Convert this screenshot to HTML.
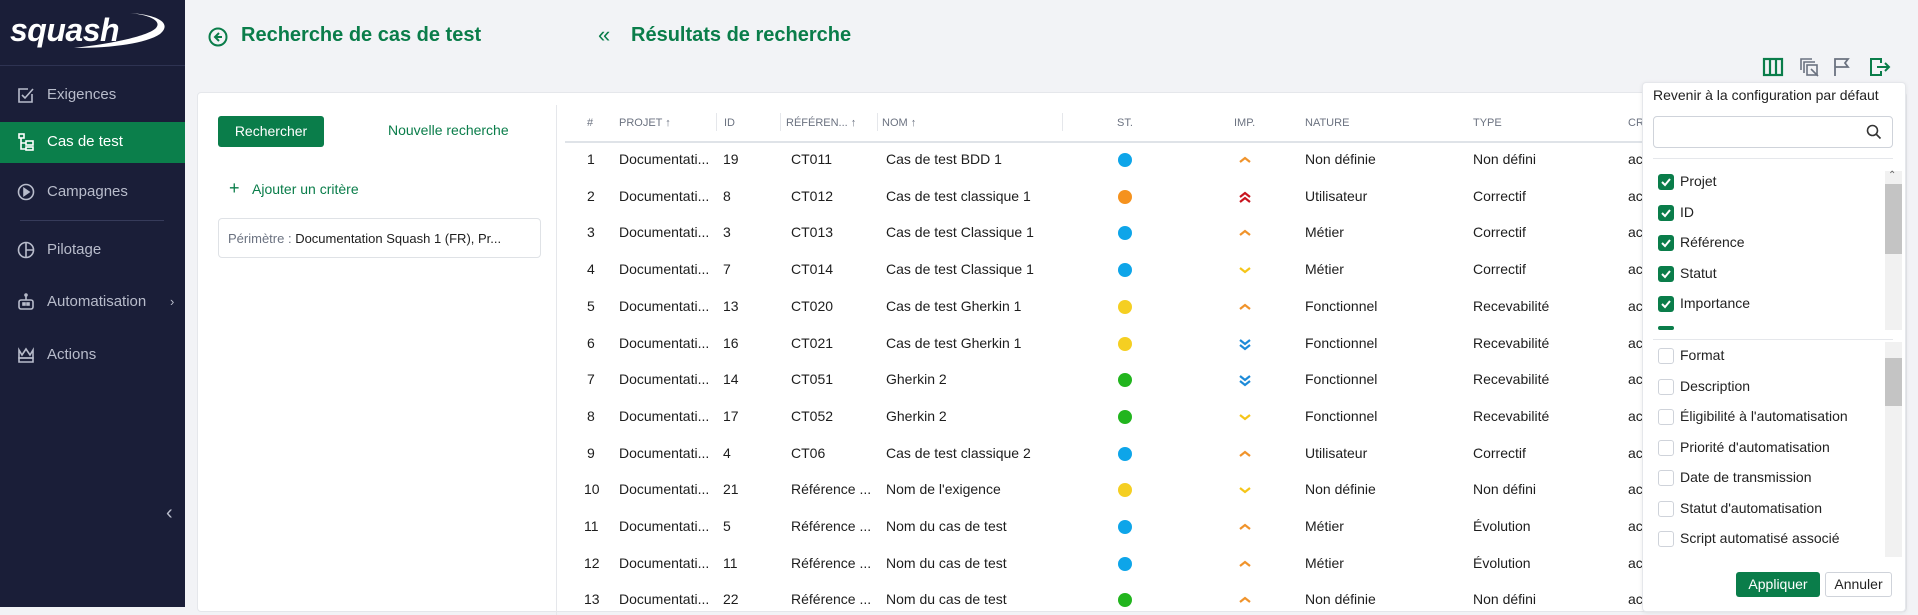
<!DOCTYPE html>
<html><head><meta charset="utf-8"><style>
*{margin:0;padding:0;box-sizing:border-box}
body{width:1918px;height:607px;overflow:hidden;background:#f2f3f6;font-family:"Liberation Sans",sans-serif;position:relative;color:#1d1d1d}
.a{position:absolute;white-space:nowrap}
#side{position:absolute;left:0;top:0;width:185px;height:607px;background:#1a1e38}
.nav{position:absolute;left:0;width:185px;height:40px;color:#b8bccb;font-size:15px;line-height:40px;padding-left:47px}
.nav svg{position:absolute;left:17px;top:11px}
.hd{font-size:11px;color:#6b7280;top:117px}
.c{font-size:14px}
.dot{position:absolute;width:14px;height:14px;border-radius:7px}
.cb{position:absolute;left:1658px;width:16px;height:16px;border-radius:3px}
.on{background:#0a7d4a}
.off{border:1px solid #cfd3da;background:#fff}
.lb{position:absolute;left:1680px;font-size:14px;color:#222}
</style></head><body>
<div id="side">
 <svg class="a" style="left:60px;top:12px" width="110" height="38"><path d="M70 1 C100 3 112 12 100 22 C85 32 50 36 14 36 C55 31 88 24 96 16 C102 9 90 3 70 1Z" fill="#fff"/></svg>
 <div class="a" style="left:10px;top:12px;color:#fff;font:italic bold 32px 'Liberation Sans',sans-serif;letter-spacing:-0.5px">squash</div>
 <div class="a" style="left:0;top:65px;width:185px;height:1px;background:#2e3352"></div>
 <div class="nav" style="top:75px"><svg width="18" height="18" fill="none" stroke="#b8bccb" stroke-width="1.6"><path d="M15 8v8H2V3h9"/><path d="M5 9l3 3 8-9"/></svg>Exigences</div>
 <div class="nav" style="top:122px;height:41px;background:#0b7f4b;color:#fff"><svg width="18" height="18" fill="none" stroke="#fff" stroke-width="1.6"><rect x="2" y="1" width="5" height="4"/><rect x="9" y="8" width="7" height="4"/><rect x="9" y="14" width="7" height="3"/><path d="M4 5v11h5M4 10h5"/></svg>Cas de test</div>
 <div class="nav" style="top:172px"><svg width="18" height="18" fill="none" stroke="#b8bccb" stroke-width="1.6"><circle cx="9" cy="9" r="7.5"/><path d="M7 5.5l5 3.5-5 3.5z" fill="#b8bccb"/></svg>Campagnes</div>
 <div class="a" style="left:20px;top:220px;width:144px;height:1px;background:#363b5a"></div>
 <div class="nav" style="top:230px"><svg width="18" height="18" fill="none" stroke="#b8bccb" stroke-width="1.6"><circle cx="9" cy="9" r="7.5"/><path d="M9 1.5v15M9 9h7.5"/></svg>Pilotage</div>
 <div class="nav" style="top:282px"><svg width="18" height="18" fill="none" stroke="#b8bccb" stroke-width="1.6"><rect x="2" y="7" width="14" height="9" rx="2"/><path d="M9 2v5"/><circle cx="9" cy="2" r="1"/><rect x="6" y="10" width="2" height="2" fill="#b8bccb"/><rect x="10" y="10" width="2" height="2" fill="#b8bccb"/></svg>Automatisation<span style="position:absolute;left:170px;font-size:13px">›</span></div>
 <div class="nav" style="top:335px"><svg width="18" height="18" fill="none" stroke="#b8bccb" stroke-width="1.6"><path d="M2 4l3 5 4-6 4 6 3-5v8H2z"/><path d="M2 12h14v4H2z"/></svg>Actions</div>
 <div class="a" style="left:166px;top:502px;color:#b8bccb;font-size:20px">‹</div>
</div>
<svg class="a" style="left:208px;top:27px" width="20" height="20" fill="none" stroke="#0a7d4a" stroke-width="2"><circle cx="10" cy="10" r="8.5"/><path d="M11 6l-4 4 4 4M7 10h7"/></svg>
<div class="a" style="left:241px;top:24px;font-size:20px;font-weight:bold;color:#0a7d4a">Recherche de cas de test</div>
<div class="a" style="left:598px;top:22px;font-size:22px;color:#0a7d4a">«</div>
<div class="a" style="left:631px;top:24px;font-size:20px;font-weight:bold;color:#0a7d4a">Résultats de recherche</div>
<svg class="a" style="left:1762px;top:57px" width="22" height="20" fill="none" stroke="#0a7d4a" stroke-width="2.2"><rect x="2" y="2" width="18" height="16"/><path d="M8 2v16M14 2v16"/></svg>
<svg class="a" style="left:1799px;top:57px" width="22" height="22" fill="none" stroke="#6b7280" stroke-width="1.6"><path d="M2 13V2h11M5 16V5h11"/><rect x="8" y="8" width="10" height="10"/><path d="M12 12l7 7"/></svg>
<svg class="a" style="left:1832px;top:57px" width="20" height="20" fill="none" stroke="#6b7280" stroke-width="1.8"><path d="M3 19V2h13l-3 4 3 4H3"/></svg>
<svg class="a" style="left:1869px;top:57px" width="22" height="20" fill="none" stroke="#0a7d4a" stroke-width="2"><path d="M12 6V2H2v16h10v-4"/><path d="M8 10h12M16 6l4 4-4 4"/></svg>
<div class="a" style="left:197px;top:92px;width:1710px;height:520px;background:#fff;border:1px solid #e5e7eb;border-radius:4px"></div>
<div class="a" style="left:556px;top:105px;width:1px;height:510px;background:#e5e7eb"></div>
<div class="a" style="left:218px;top:116px;width:106px;height:31px;background:#0a7d4a;border-radius:3px;color:#fff;font-size:14px;line-height:31px;text-align:center">Rechercher</div>
<div class="a" style="left:388px;top:122px;font-size:14px;color:#0a7d4a">Nouvelle recherche</div>
<div class="a" style="left:229px;top:178px;font-size:18px;color:#0a7d4a">+</div>
<div class="a" style="left:252px;top:181px;font-size:14px;color:#0a7d4a">Ajouter un critère</div>
<div class="a" style="left:218px;top:218px;width:323px;height:40px;border:1px solid #dfe2e6;border-radius:4px"></div>
<div class="a" style="left:228px;top:231px;font-size:13px;color:#6b7280">Périmètre : <span style="color:#1d1d1d">Documentation Squash 1 (FR), Pr...</span></div>
<div class="a hd" style="left:587px">#</div>
<div class="a hd" style="left:619px">PROJET ↑</div>
<div class="a" style="left:716px;top:113px;width:1px;height:18px;background:#e5e7eb"></div>
<div class="a hd" style="left:724px">ID</div>
<div class="a" style="left:780px;top:113px;width:1px;height:18px;background:#e5e7eb"></div>
<div class="a hd" style="left:786px">RÉFÉREN... ↑</div>
<div class="a" style="left:877px;top:113px;width:1px;height:18px;background:#e5e7eb"></div>
<div class="a hd" style="left:882px">NOM ↑</div>
<div class="a" style="left:1062px;top:113px;width:1px;height:18px;background:#e5e7eb"></div>
<div class="a hd" style="left:1117px">ST.</div>
<div class="a hd" style="left:1234px">IMP.</div>
<div class="a hd" style="left:1305px">NATURE</div>
<div class="a hd" style="left:1473px">TYPE</div>
<div class="a hd" style="left:1628px">CR</div>
<div class="a" style="left:565px;top:141px;width:1080px;height:2px;background:#dfe3e8"></div>
<div id="rows"></div>
<div class="a" style="left:1642px;top:82px;width:264px;height:530px;background:#fff;border:1px solid #e5e7eb;border-radius:4px;box-shadow:0 1px 4px rgba(0,0,0,.08)"></div>
<div class="a" style="left:1653px;top:87px;font-size:14px;color:#222">Revenir à la configuration par défaut</div>
<div class="a" style="left:1653px;top:116px;width:240px;height:32px;border:1px solid #cfd3da;border-radius:4px"></div>
<svg class="a" style="left:1866px;top:124px" width="16" height="16" fill="none" stroke="#333" stroke-width="1.6"><circle cx="6.5" cy="6.5" r="5"/><path d="M10 10l4.5 4.5"/></svg>
<div class="a" style="left:1653px;top:158px;width:240px;height:1px;background:#e5e7eb"></div>
<div class="a" style="left:1885px;top:171px;width:17px;height:159px;background:#f1f1f1"></div>
<div class="a" style="left:1885px;top:184px;width:17px;height:70px;background:#c4c4c4"></div>
<div class="a" style="left:1888px;top:170px;font-size:10px;color:#666">⌃</div>
<div class="a" style="left:1653px;top:339px;width:240px;height:1px;background:#e5e7eb"></div>
<div class="a" style="left:1885px;top:342px;width:17px;height:215px;background:#f1f1f1"></div>
<div class="a" style="left:1885px;top:358px;width:17px;height:48px;background:#c4c4c4"></div>
<div id="cbs"></div>
<div class="a" style="left:1736px;top:572px;width:84px;height:25px;background:#0a7d4a;border-radius:3px;color:#fff;font-size:14px;line-height:25px;text-align:center">Appliquer</div>
<div class="a" style="left:1825px;top:572px;width:67px;height:25px;border:1px solid #cfd3da;border-radius:3px;color:#222;font-size:14px;line-height:23px;text-align:center">Annuler</div>
<script>
var R=[[1,19,"CT011","Cas de test BDD 1","#0ea5e9","u","Non définie","Non défini"],
[2,8,"CT012","Cas de test classique 1","#f5921e","uu","Utilisateur","Correctif"],
[3,3,"CT013","Cas de test Classique 1","#0ea5e9","u","Métier","Correctif"],
[4,7,"CT014","Cas de test Classique 1","#0ea5e9","d","Métier","Correctif"],
[5,13,"CT020","Cas de test Gherkin 1","#f5cf22","u","Fonctionnel","Recevabilité"],
[6,16,"CT021","Cas de test Gherkin 1","#f5cf22","dd","Fonctionnel","Recevabilité"],
[7,14,"CT051","Gherkin 2","#22b51e","dd","Fonctionnel","Recevabilité"],
[8,17,"CT052","Gherkin 2","#22b51e","d","Fonctionnel","Recevabilité"],
[9,4,"CT06","Cas de test classique 2","#0ea5e9","u","Utilisateur","Correctif"],
[10,21,"Référence ...","Nom de l'exigence","#f5cf22","d","Non définie","Non défini"],
[11,5,"Référence ...","Nom du cas de test","#0ea5e9","u","Métier","Évolution"],
[12,11,"Référence ...","Nom du cas de test","#0ea5e9","u","Métier","Évolution"],
[13,22,"Référence ...","Nom du cas de test","#22b51e","u","Non définie","Non défini"]];
var h="";
R.forEach(function(r,i){var y=160+i*36.7,t=y-9;
h+='<div class="a c" style="left:'+(r[0]>9?584:587)+'px;top:'+t+'px">'+r[0]+'</div>';
h+='<div class="a c" style="left:619px;top:'+t+'px">Documentati...</div>';
h+='<div class="a c" style="left:723px;top:'+t+'px">'+r[1]+'</div>';
h+='<div class="a c" style="left:791px;top:'+t+'px">'+r[2]+'</div>';
h+='<div class="a c" style="left:886px;top:'+t+'px">'+r[3]+'</div>';
h+='<div class="dot" style="left:1118px;top:'+(y-7)+'px;background:'+r[4]+'"></div>';
var col={u:"#f0932b",uu:"#c8141e",d:"#f5c518",dd:"#1c8ad8"}[r[5]],p;
if(r[5]=="u")p="M2 8l5-4 5 4";else if(r[5]=="d")p="M2 4l5 4 5-4";else if(r[5]=="uu")p="M2 6l5-4 5 4M2 11l5-4 5 4";else p="M2 2l5 4 5-4M2 7l5 4 5-4";
h+='<svg class="a" style="left:1238px;top:'+(y-6)+'px" width="14" height="13" fill="none" stroke="'+col+'" stroke-width="2.2"><path d="'+p+'"/></svg>';
h+='<div class="a c" style="left:1305px;top:'+t+'px">'+r[6]+'</div>';
h+='<div class="a c" style="left:1473px;top:'+t+'px">'+r[7]+'</div>';
h+='<div class="a c" style="left:1628px;top:'+t+'px">ac</div>';});
document.getElementById("rows").innerHTML=h;
var A=["Projet","ID","Référence","Statut","Importance"],B=["Format","Description","Éligibilité à l'automatisation","Priorité d'automatisation","Date de transmission","Statut d'automatisation","Script automatisé associé"],g="";
A.forEach(function(s,i){var y=182+i*30.6;g+='<div class="cb on" style="top:'+(y-8)+'px"><svg width="16" height="16" fill="none" stroke="#fff" stroke-width="2"><path d="M4 8l3 3 5-6"/></svg></div><div class="lb" style="top:'+(y-9)+'px">'+s+'</div>';});
g+='<div class="cb on" style="top:326px;height:4px"></div>';
B.forEach(function(s,i){var y=356+i*30.5;g+='<div class="cb off" style="top:'+(y-8)+'px"></div><div class="lb" style="top:'+(y-9)+'px">'+s+'</div>';});
document.getElementById("cbs").innerHTML=g;
</script>
</body></html>
